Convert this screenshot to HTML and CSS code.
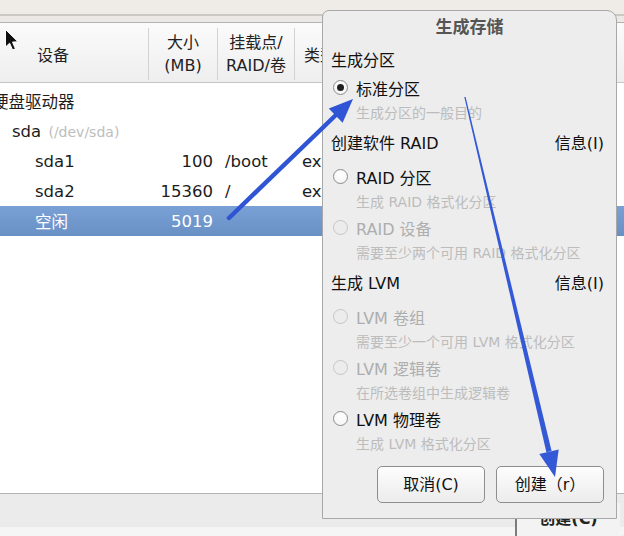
FILE: index.html
```html
<!DOCTYPE html>
<html>
<head>
<meta charset="utf-8">
<link rel="stylesheet" href="styles.css">
</head>
<body>
<div class="win">
  <div class="topstrip"></div>
  <div class="gap"></div>
  <div class="thead">
    <div class="th th-dev">设备</div>
    <div class="th th-c"><span>大小</span><span>(MB)</span></div>
    <div class="th th-c"><span>挂载点/</span><span>RAID/卷</span></div>
    <div class="th th-type">类型</div>
    <div class="th-rest"></div>
  </div>
  <div class="tbody">
    <div class="row"><div class="c1 lv0">硬盘驱动器</div><div></div><div></div><div></div></div>
    <div class="row"><div class="c1 lv1">sda <span class="path">(/dev/sda)</span></div><div></div><div></div><div></div></div>
    <div class="row"><div class="c1 lv2">sda1</div><div class="size">100</div><div class="mnt">/boot</div><div class="typ">ext4</div></div>
    <div class="row"><div class="c1 lv2">sda2</div><div class="size">15360</div><div class="mnt">/</div><div class="typ">ext4</div></div>
    <div class="row sel"><div class="c1 lv2">空闲</div><div class="size">5019</div><div class="mnt"></div><div class="typ"></div></div>
  </div>
  <div class="bottombar">
    <div class="bbtn">创建(C)</div>
    <span class="ret">↵</span>
  </div>
</div>

<div class="dlg">
  <div class="dlg-title">生成存储</div>
  <div class="sec-h"><span>生成分区</span></div>
  <div class="opt"><span class="radio on"></span><span>标准分区</span></div>
  <div class="desc">生成分区的一般目的</div>
  <div class="sec-h"><span>创建软件 RAID</span><span>信息(I)</span></div>
  <div class="opt mt"><span class="radio"></span><span>RAID 分区</span></div>
  <div class="desc">生成 RAID 格式化分区</div>
  <div class="opt dis"><span class="radio"></span><span>RAID 设备</span></div>
  <div class="desc">需要至少两个可用 RAID 格式化分区</div>
  <div class="sec-h"><span>生成 LVM</span><span>信息(I)</span></div>
  <div class="opt dis mt"><span class="radio"></span><span>LVM 卷组</span></div>
  <div class="desc">需要至少一个可用 LVM 格式化分区</div>
  <div class="opt dis"><span class="radio"></span><span>LVM 逻辑卷</span></div>
  <div class="desc">在所选卷组中生成逻辑卷</div>
  <div class="opt"><span class="radio"></span><span>LVM 物理卷</span></div>
  <div class="desc">生成 LVM 格式化分区</div>
  <div class="btns">
    <div class="btn">取消(C)</div>
    <div class="btn">创建（r）</div>
  </div>
</div>

<svg class="overlay" width="624" height="536" viewBox="0 0 624 536">
  <path d="M5.5 29.5 L5.5 47 L9.6 43.2 L12.6 50 L15.4 48.8 L12.5 42.1 L18 41.8 Z" fill="#111" stroke="#fff" stroke-width="1"/>
  <line x1="229" y1="218" x2="338" y2="113" stroke="#2f55d4" stroke-width="4.5" stroke-linecap="round"/>
  <polygon points="353,99 342.6,122.8 328.8,108.4" fill="#2f55d4"/>
  <polygon points="464.3,97 465.6,97 551.6,451.1 546.4,452.3" fill="#3459d6"/>
  <polygon points="555,477 558.7,449.4 539.3,454" fill="#3459d6"/>
</svg>
</body>
</html>
```

FILE: styles.css
```css
* { box-sizing: border-box; margin: 0; padding: 0; }
html, body { width: 624px; height: 536px; overflow: hidden; }
body {
  position: relative;
  font-family: "DejaVu Sans", "Noto Sans CJK SC", sans-serif;
  color: #1c1c1c;
  background: #f5f5f5;
}
.win { width: 624px; height: 536px; display: flex; flex-direction: column; }
.topstrip { flex: none; height: 16px; background: #efebe7; border-bottom: 2px solid #cbc7c3; }
.gap { flex: none; height: 6px; background: #ebe8e5; }

.thead {
  flex: none;
  height: 61px;
  border-top: 1px solid #b3b3b3;
  border-bottom: 1px solid #c6c6c6;
  background: linear-gradient(#fbfbfb, #eeeeee);
  display: grid;
  grid-template-columns: 149px 69px 77px 27px 1fr;
  font-size: 16px;
}
.th {
  display: flex;
  flex-direction: column;
  justify-content: center;
  margin: 5px 0 2px;
  border-right: 1px solid #d2d2d2;
  line-height: 23px;
  color: #222;
}
.th-dev { padding-left: 37px; padding-top: 2px; }
.th-c { align-items: center; }
.th-type { border-right: none; padding-left: 9px; padding-top: 2px; white-space: nowrap; overflow: hidden; }

.tbody {
  flex: none;
  height: 411px;
  padding-top: 3px;
  background: #fff;
  border-bottom: 1px solid #b4b4b4;
}
.row {
  height: 30px;
  display: grid;
  grid-template-columns: 149px 69px 77px 27px;
  align-items: center;
  font-size: 16.5px;
  white-space: nowrap;
}
.row.sel { background: linear-gradient(#7aa1d5, #6990c6); color: #fff; }
.c1.lv0 { margin-left: -8px; }
.c1.lv1 { padding-left: 12px; }
.c1.lv2 { padding-left: 35px; }
.path { font-size: 14px; color: #bdbdbd; margin-left: 2px; }
.size { text-align: right; padding-right: 5px; }
.mnt { padding-left: 7px; }
.typ { padding-left: 7px; overflow: hidden; }

.bottombar {
  flex: 1;
  background: linear-gradient(#ebebeb 0 33px, #f5f5f5 33px);
  display: flex;
  justify-content: flex-end;
  align-items: flex-start;
  padding-top: 9px;
}
.bbtn {
  width: 105px;
  height: 40px;
  border-left: 2px solid #7c7c7c;
  background: #f3f3f3;
  text-align: center;
  line-height: 32px;
  font-weight: bold;
  font-size: 16px;
  color: #222;
}
.ret { width: 4px; font-size: 10px; color: #999; line-height: 1; margin-top: 30px; overflow: hidden; }

.dlg {
  position: absolute;
  left: 322px;
  top: 10px;
  width: 295px;
  height: 509px;
  background: #ededed;
  border: 1px solid #a8a8a8;
  border-radius: 7px 10px 0 0;
  padding: 0 12px 0 8px;
  display: flex;
  flex-direction: column;
  font-size: 16px;
}
.dlg-title {
  height: 32px;
  line-height: 32px;
  text-align: center;
  font-size: 17px;
  font-weight: bold;
  color: #555;
  padding-left: 4px;
}
.sec-h {
  height: 32px;
  display: flex;
  justify-content: space-between;
  align-items: center;
  color: #111;
  white-space: nowrap;
}
.opt {
  height: 25px;
  display: flex;
  align-items: center;
  gap: 8px;
  padding-left: 2px;
  color: #111;
  white-space: nowrap;
}
.opt.mt { margin-top: 6px; }
.opt.dis { color: #aeaeae; }
.radio {
  flex: none;
  width: 15px;
  height: 15px;
  border-radius: 50%;
  border: 1px solid #8c8c8c;
  background: radial-gradient(circle at 50% 35%, #ffffff, #f2f2f2);
  display: flex;
  align-items: center;
  justify-content: center;
}
.radio.on::after {
  content: "";
  width: 7px;
  height: 7px;
  border-radius: 50%;
  background: #202020;
}
.opt.dis .radio { border-color: #c6c6c6; background: #ececec; }
.desc {
  height: 26px;
  line-height: 26px;
  padding-left: 25px;
  font-size: 14px;
  color: #bcbcbc;
  white-space: nowrap;
}
.btns {
  margin-top: 9px;
  display: flex;
  justify-content: flex-end;
  gap: 11px;
}
.btn {
  width: 108px;
  height: 37px;
  border: 1px solid #8e8e8e;
  border-radius: 5px;
  background: linear-gradient(#fdfdfd, #ececec);
  text-align: center;
  line-height: 35px;
  font-size: 16px;
  color: #111;
}
.overlay { position: absolute; left: 0; top: 0; pointer-events: none; }
```
